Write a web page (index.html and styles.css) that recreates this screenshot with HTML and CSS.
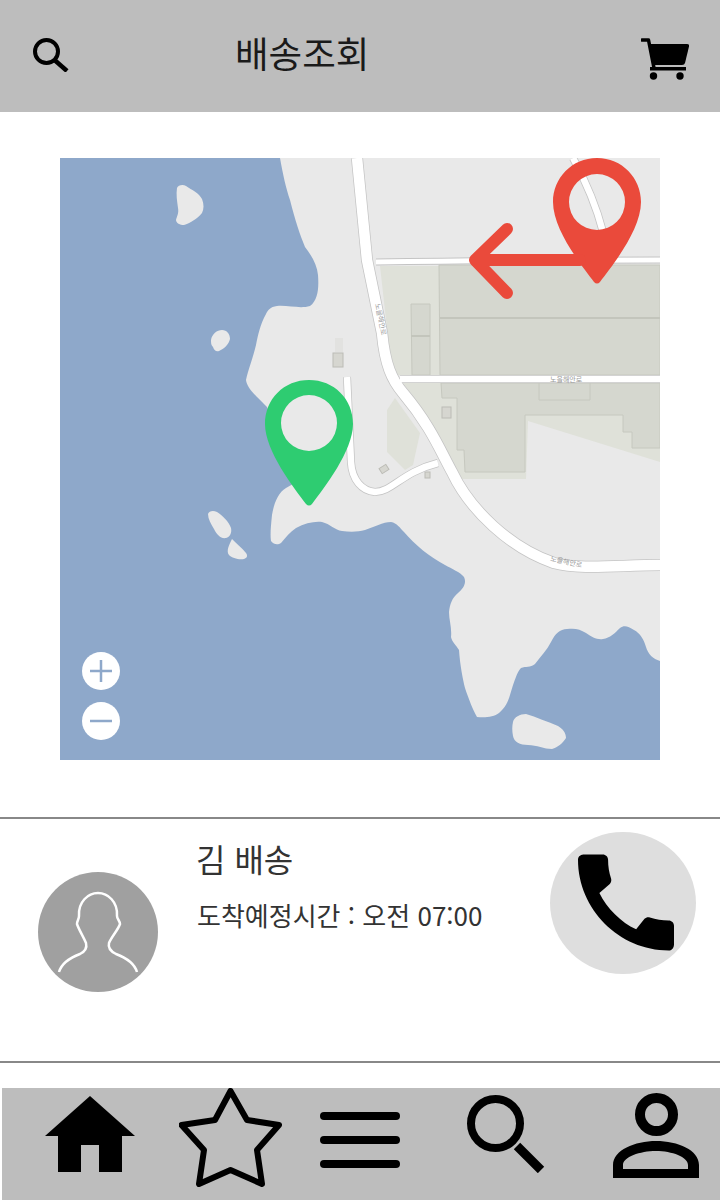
FILE: index.html
```html
<!DOCTYPE html>
<html lang="ko">
<head>
<meta charset="utf-8">
<title>배송조회</title>
<link rel="stylesheet" href="styles.css">
</head>
<body>
<div class="page">
  <header class="topbar">
    <svg class="ic-search" viewBox="33 38 36 34" width="36" height="34" aria-hidden="true">
      <circle cx="46.5" cy="51.500" r="11.500" fill="none" stroke="#000" stroke-width="4"/>
      <path d="M54.5 60 L67 71" fill="none" stroke="#000" stroke-width="4.5"/>
    </svg>
    <h1 class="title">배송조회</h1>
    <svg class="ic-cart" viewBox="641 38 48 42" width="48" height="42" aria-hidden="true">
      <path d="M642 40 H648.5 L654 68" fill="none" stroke="#000" stroke-width="3.5" stroke-linecap="round" stroke-linejoin="round"/>
      <path d="M650 44 H687 Q689.5 44 689 46.500 L685 63 Q684.500 65 682 65 H654 Z" fill="#000"/>
      <rect x="650" y="67" width="36" height="3.500" fill="#000"/>
      <circle cx="653.500" cy="76" r="3.700" fill="#000"/>
      <circle cx="680" cy="76" r="3.700" fill="#000"/>
    </svg>
  </header>

  <section class="mapwrap">
    <svg class="map" viewBox="60 158 600 602" width="600" height="602" role="img" aria-label="지도">
      <rect class="land" x="60" y="158" width="600" height="602"/>

      <path class="zone" d="M380 266 H660 V375 H396 Q392 370 390 355 Z"/>
      <path class="block" d="M439 265 H660 V375 H440 Z"/>
      <path class="edge" d="M440 318 H660"/>
      <path class="block" d="M411 304 H430 V375 H412 Z"/>
      <path class="edge" d="M411 336 H430"/>
      <path class="zone" d="M403 383 H660 V462 L528 421 L526 479 H462 L430 420 Z"/>
      <path class="block" d="M441 383 H660 V448 H632 V432 H623 V415 H525 V472 H465 L464 450 H457 V398 H442 Z"/>
      <path class="block" d="M539 383 H590 V400 H539 Z"/>
      <path class="zone" d="M387 410 L395 398 L420 433 L413 465 L405 470 L387 452 Z"/>
      <rect class="hut" x="442" y="407" width="9" height="11"/>
      <rect class="hut" x="380" y="466" width="8" height="6" transform="rotate(-32 384 469)"/>
      <rect class="hut" x="425" y="472" width="5" height="6"/>
      <rect class="hut" x="333" y="353" width="10" height="14"/>
      <rect class="hut-pale" x="335" y="338" width="8" height="14"/>

      <g class="roads-casing">
        <path class="w7" d="M573 158 C585 180 596 205 603 232"/>
        <path class="w6" d="M376 262 Q500 260 660 260"/>
        <path class="w7" d="M400 379 H660"/>
        <path class="w7" d="M347 377 L351 462 C352 480 362 491 375 492 C392 492 402 472 438 463"/>
        <path class="w11" d="M357 158 L367 260 L382 333 C385 365 392 380 403 393 C430 425 440 450 452 472 C470 510 510 548 554 563 C580 570 620 565 660 565"/>
      </g>
      <g class="roads">
        <path class="w7" d="M573 158 C585 180 596 205 603 232"/>
        <path class="w6" d="M376 262 Q500 260 660 260"/>
        <path class="w7" d="M400 379 H660"/>
        <path class="w7" d="M347 377 L351 462 C352 480 362 491 375 492 C392 492 402 472 438 463"/>
        <path class="w11" d="M357 158 L367 260 L382 333 C385 365 392 380 403 393 C430 425 440 450 452 472 C470 510 510 548 554 563 C580 570 620 565 660 565"/>
      </g>
      <text class="maplabel" transform="translate(375 304) rotate(78)">노을해안로</text>
      <text class="maplabel" x="550" y="382">노을해안로</text>
      <text class="maplabel" transform="translate(550 561) rotate(12)">노을해안로</text>

      <path class="water" d="M60 158 H280 C283 175 286 188 290 200 C295 220 300 235 305 247 C312 256 317 265 318 275 C319 288 318 300 310 306 C300 309 288 305 277 306 C270 307 268 310 266 314 C260 325 258 335 256 345 C253 358 248 370 246 380 C247 388 255 395 267 407 L300 480 L286 488 C278 493 274 503 272 515 C271 525 270 535 271 541 C274 545 278 545 281 543 C286 537 290 532 296 528 C305 523 315 521 322 522 C330 524 335 530 342 531 C350 532 358 532 365 530 C374 527 383 522 391 522 C397 523 400 528 404 532 C415 545 430 557 445 565 C452 569 460 572 464 577 C467 583 463 589 458 593 C452 598 450 604 449 612 C449 620 452 628 451 637 C452 642 456 645 459 650 C460 665 463 680 465 688 C469 700 473 710 477 717 C485 718 494 717 499 713 C505 708 508 702 510 695 C514 682 517 672 521 668 C526 666 530 668 535 664 C541 656 547 650 551 642 C555 634 560 629 567 629 C575 628 580 629 586 633 C592 637 597 640 603 639 C610 638 615 633 620 628 C624 625 628 626 634 630 C640 633 644 640 646 647 C648 654 653 659 660 661 V760 H60 Z"/>

      <path class="land" d="M177 188 C178 185 183 184 186 186 C192 190 199 193 202 199 C204 204 204 209 202 213 C197 219 190 223 184 225 C180 225 176 223 176 220 C177 216 179 213 178 208 C177 201 176 194 177 188 Z"/>
      <path class="land" d="M211 340 C212 334 217 330 222 330 C227 330 230 334 230 339 C229 344 224 349 219 351 C216 352 214 350 213 347 C211 345 211 343 211 340 Z"/>
      <path class="land" d="M208 514 C209 511 213 510 217 512 C223 516 229 522 231 528 C232 533 230 537 226 538 C221 539 217 535 214 529 C211 524 208 519 208 514 Z"/>
      <path class="land" d="M232 539 C236 543 242 548 246 553 C248 556 247 558 244 559 C239 560 232 558 229 555 C226 551 229 545 232 539 Z"/>
      <path class="land" d="M513 722 C514 717 520 714 526 714 C536 717 548 722 558 726 C563 729 566 733 566 738 C563 743 558 747 552 749 C544 749 537 745 528 745 C520 745 514 742 513 736 C512 731 512 726 513 722 Z"/>

      <path class="pin-red" fill-rule="evenodd" d="M597 158 C622 158 641 178 641 202 C641 230 612 266 600 282 Q597 285 594 282 C582 266 553 230 553 202 C553 178 572 158 597 158 Z M597 174 A28 28 0 1 0 597 230 A28 28 0 1 0 597 174 Z"/>
      <path class="arrow" d="M580 260 H476 M507 229 L475 260 L507 293"/>
      <path class="pin-green" fill-rule="evenodd" d="M309 380 C334 380 353 399 353 424 C353 451 324 488 312 504 Q309 507 306 504 C294 488 265 451 265 424 C265 399 284 380 309 380 Z M309 395 A28 28 0 1 0 309 451 A28 28 0 1 0 309 395 Z"/>

      <circle class="zoombtn" cx="101" cy="671" r="19"/>
      <path class="zoomsign" d="M90 671 H112 M101 660 V682"/>
      <circle class="zoombtn" cx="101" cy="721" r="19"/>
      <path class="zoomsign" d="M90 721 H112"/>
    </svg>
  </section>

  <section class="info">
    <svg class="avatar" viewBox="38 872 120 120" width="120" height="120" role="img" aria-label="프로필">
      <circle cx="98" cy="932" r="60" fill="#a0a0a0"/>
      <path d="M59 972 C62 962 72 957 80 954 C86 951 87 947 86 943 C83 936 79 930 77 924 C77 921 79 919 79 916 C78 902 88 893 98 893 C108 893 118 902 117 916 C117 919 120 921 120 924 C118 930 112 936 109 943 C108 947 110 951 116 954 C124 957 134 962 137 972" fill="none" stroke="#fff" stroke-width="2.500"/>
    </svg>
    <div class="driver">
      <div class="name">김 배송</div>
      <div class="eta">도착예정시간 : 오전 07:00</div>
    </div>
    <div class="call">
      <svg viewBox="3 3 18 18" width="96" height="97" aria-hidden="true">
        <path d="M20.01 15.38c-1.23 0-2.42-.2-3.53-.56-.35-.12-.74-.03-1.01.24l-1.57 1.97c-2.83-1.35-5.48-3.9-6.89-6.83l1.95-1.66c.27-.28.35-.67.24-1.02-.37-1.11-.56-2.3-.56-3.53 0-.54-.45-.99-.99-.99H4.19C3.65 3 3 3.24 3 3.99 3 13.28 10.73 21 20.01 21c.71 0 .99-.63.99-1.18v-3.45c0-.54-.45-.99-.99-.99z" fill="#000"/>
      </svg>
    </div>
  </section>

  <nav class="tabbar">
    <svg class="tab tab-home" viewBox="45 1096 90 76" width="90" height="76" aria-label="홈">
      <path d="M90 1096 L135 1136 H122 V1172 H99 V1145 H81 V1172 H58 V1136 H45 Z" fill="#000"/>
    </svg>
    <svg class="tab tab-star" viewBox="179 1088 103 100" width="103" height="100" aria-label="즐겨찾기">
      <path d="M230.500 1091 L247 1120 L279 1125 L257 1150 L262 1184 L230.500 1170 L199 1184 L204 1150 L181.500 1125 L215 1120 Z" fill="none" stroke="#000" stroke-width="6" stroke-linejoin="round"/>
    </svg>
    <svg class="tab tab-menu" viewBox="320 1112 80 56" width="80" height="56" aria-label="메뉴">
      <rect x="320" y="1112" width="80" height="8" rx="4" fill="#000"/>
      <rect x="320" y="1136" width="80" height="8" rx="4" fill="#000"/>
      <rect x="320" y="1160" width="80" height="8" rx="4" fill="#000"/>
    </svg>
    <svg class="tab tab-find" viewBox="467 1095 78 78" width="78" height="78" aria-label="검색">
      <circle cx="495.500" cy="1123.500" r="24.500" fill="none" stroke="#000" stroke-width="8"/>
      <path d="M517 1146 L541 1170" fill="none" stroke="#000" stroke-width="9"/>
    </svg>
    <svg class="tab tab-user" viewBox="613 1093 86 85" width="86" height="85" aria-label="내 정보">
      <circle cx="656.500" cy="1114.500" r="16.500" fill="none" stroke="#000" stroke-width="10"/>
      <path fill-rule="evenodd" d="M613 1178 V1165 C613 1150 635 1141 656 1141 C678 1141 699 1150 699 1165 V1178 Z M623 1169 H688 V1165 C688 1157 672 1151 656 1151 C640 1151 623 1157 623 1165 Z" fill="#000"/>
    </svg>
  </nav>
</div>
</body>
</html>
```

FILE: styles.css
```css
* { box-sizing: border-box; }

html, body {
  margin: 0;
  padding: 0;
  background: #fff;
}

body {
  font-family: "Noto Sans CJK KR", "Noto Sans", sans-serif;
}

.page {
  width: 720px;
  height: 1200px;
  display: flex;
  flex-direction: column;
  overflow: hidden;
}

svg { display: block; flex: none; }

/* top bar */
.topbar {
  height: 112px;
  background: #bdbdbd;
  display: flex;
  align-items: flex-start;
  flex: none;
}
.ic-search { margin: 38px 0 0 33px; }
.title {
  margin: 27px 0 0 166px;
  font-size: 36.5px;
  line-height: 52px;
  font-weight: 400;
  color: #1a1a1a;
  width: 406px;
}
.ic-cart { margin-top: 38px; }

/* map */
.mapwrap {
  padding: 46px 60px 0;
  height: 705px;
  flex: none;
}
.land { fill: #e9e9e9; }
.water { fill: #8ea8ca; }
.zone { fill: #dfe1d9; }
.block { fill: #d5d7cf; stroke: #c6c8bf; stroke-width: 1; }
.edge { fill: none; stroke: #c3c5bc; stroke-width: 2; }
.hut { fill: #d6d6d0; stroke: #bcbcb6; stroke-width: 1; }
.hut-pale { fill: #e2e2e0; }

.roads-casing path, .roads path { fill: none; }
.roads-casing path { stroke: #c4c4c4; }
.roads path { stroke: #fff; }
.roads-casing .w6 { stroke-width: 7; }
.roads-casing .w7 { stroke-width: 8; }
.roads-casing .w11 { stroke-width: 12; }
.roads .w6 { stroke-width: 5; }
.roads .w7 { stroke-width: 6.5; }
.roads .w11 { stroke-width: 10.5; }
.maplabel {
  font-size: 7px;
  fill: #9a9a9a;
}

.pin-red { fill: #ea4a3b; }
.pin-green { fill: #2ecc71; }
.arrow {
  fill: none;
  stroke: #ea4a3b;
  stroke-width: 12;
  stroke-linecap: round;
  stroke-linejoin: round;
}
.zoombtn { fill: #fff; }
.zoomsign { fill: none; stroke: #8ea8ca; stroke-width: 2.5; }

/* driver row */
.info {
  height: 246px;
  flex: none;
  border-top: 2px solid #888;
  border-bottom: 2px solid #888;
  display: flex;
  align-items: flex-start;
  padding-left: 38px;
}
.avatar { margin-top: 53px; }
.driver {
  margin-left: 38px;
  width: 354px;
  color: #333;
  font-weight: 400;
}
.name {
  margin-top: 16px;
  font-size: 32px;
  line-height: 46px;
}
.eta {
  margin-top: 15px;
  font-size: 26px;
  line-height: 38px;
  white-space: nowrap;
  padding-left: 1px;
}
.call {
  margin-top: 13px;
  width: 146px;
  height: 142px;
  border-radius: 50%;
  background: #dedede;
  display: flex;
  align-items: center;
  justify-content: center;
  padding: 0 0 2px 6px;
}

/* bottom tabs */
.tabbar {
  margin: 25px 0 0 2px;
  height: 112px;
  background: #bdbdbd;
  display: flex;
  align-items: flex-start;
  flex: none;
}
.tab-home { margin: 8px 0 0 43px; }
.tab-star { margin: 0 0 0 44px; }
.tab-menu { margin: 24px 0 0 38px; }
.tab-find { margin: 7px 0 0 67px; }
.tab-user { margin: 5px 0 0 68px; }
```
